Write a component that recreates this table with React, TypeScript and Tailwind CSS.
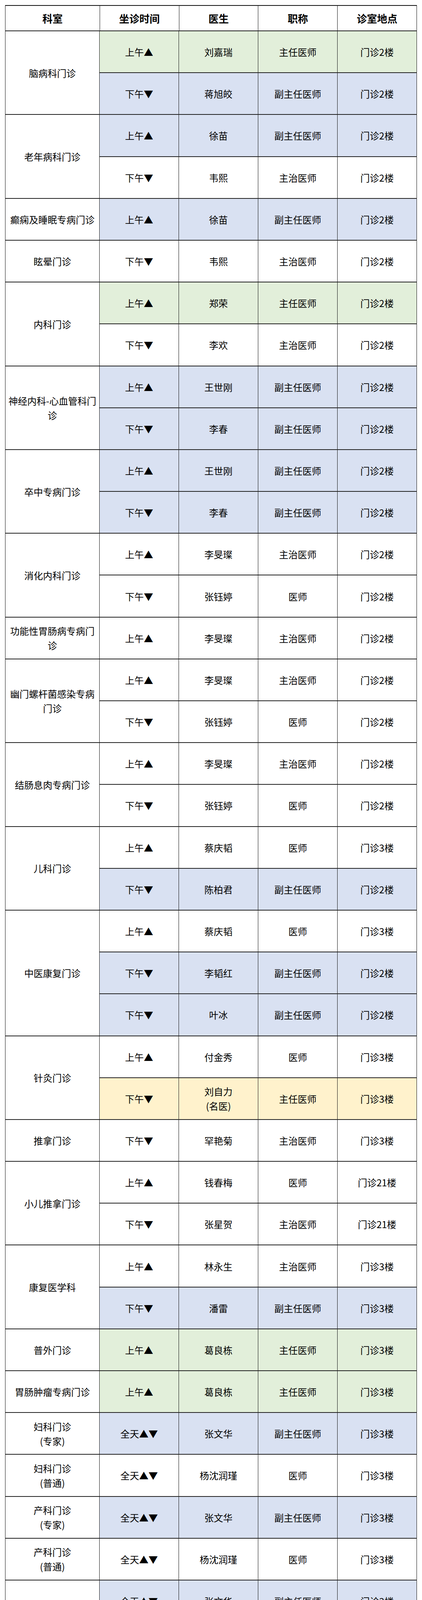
import React from "react";

type Row = { time: React.ReactNode; doctor: React.ReactNode; title: string; loc: string; bg: string };
type Group = { dept: React.ReactNode; rows: Row[] };

const G = "bg-[#e2efda]";
const B = "bg-[#d9e1f2]";
const W = "bg-white";
const Y = "bg-[#fff2cc]";

const AM = "上午▲";
const PM = "下午▼";
const ALL = "全天▲▼";

function Sun() {
  const rays = [];
  for (let i = 0; i < 12; i++) {
    const a = (i * Math.PI * 2) / 12;
    const x1 = 12 + Math.cos(a) * 7.5;
    const y1 = 12 + Math.sin(a) * 7.5;
    const x2 = 12 + Math.cos(a) * 11.2;
    const y2 = 12 + Math.sin(a) * 11.2;
    rays.push(
      <line key={i} x1={x1} y1={y1} x2={x2} y2={y2} stroke="#e39a00" strokeWidth="2.8" strokeLinecap="round" />
    );
  }
  return (
    <svg width="27" height="27" viewBox="0 0 24 24" className="inline-block shrink-0">
      {rays}
      <circle cx="12" cy="12" r="8.2" fill="#ffd21f" stroke="#e39a00" strokeWidth="1" />
      <circle cx="9.2" cy="10.4" r="1.1" fill="#4a2f00" />
      <circle cx="14.8" cy="10.4" r="1.1" fill="#4a2f00" />
      <path d="M8.4 13.4 Q12 17.2 15.6 13.4" stroke="#4a2f00" strokeWidth="1.3" fill="none" strokeLinecap="round" />
    </svg>
  );
}

const br = (a: string, b: string) => (
  <>
    {a}
    <br />
    {b}
  </>
);

const dotName = (a: string, b: string) => (
  <>
    {a}
    <span style={{ fontFamily: '"Liberation Sans", sans-serif' }}>·</span>
    {b}
  </>
);

const groups: Group[] = [
  {
    dept: "脑病科门诊",
    rows: [
      { time: AM, doctor: "刘嘉瑞", title: "主任医师", loc: "门诊2楼", bg: G },
      { time: PM, doctor: "蒋旭皎", title: "副主任医师", loc: "门诊2楼", bg: B },
    ],
  },
  {
    dept: "老年病科门诊",
    rows: [
      { time: AM, doctor: "徐苗", title: "副主任医师", loc: "门诊2楼", bg: B },
      { time: PM, doctor: "韦熙", title: "主治医师", loc: "门诊2楼", bg: W },
    ],
  },
  { dept: "癫痫及睡眠专病门诊", rows: [{ time: AM, doctor: "徐苗", title: "副主任医师", loc: "门诊2楼", bg: B }] },
  { dept: "眩晕门诊", rows: [{ time: PM, doctor: "韦熙", title: "主治医师", loc: "门诊2楼", bg: W }] },
  {
    dept: "内科门诊",
    rows: [
      { time: AM, doctor: "郑荣", title: "主任医师", loc: "门诊2楼", bg: G },
      { time: PM, doctor: "李欢", title: "主治医师", loc: "门诊2楼", bg: W },
    ],
  },
  {
    dept: "神经内科-心血管科门诊",
    rows: [
      { time: AM, doctor: "王世刚", title: "副主任医师", loc: "门诊2楼", bg: B },
      { time: PM, doctor: "李春", title: "副主任医师", loc: "门诊2楼", bg: B },
    ],
  },
  {
    dept: "卒中专病门诊",
    rows: [
      { time: AM, doctor: "王世刚", title: "副主任医师", loc: "门诊2楼", bg: B },
      { time: PM, doctor: "李春", title: "副主任医师", loc: "门诊2楼", bg: B },
    ],
  },
  {
    dept: "消化内科门诊",
    rows: [
      { time: AM, doctor: "李旻璨", title: "主治医师", loc: "门诊2楼", bg: W },
      { time: PM, doctor: "张钰婷", title: "医师", loc: "门诊2楼", bg: W },
    ],
  },
  { dept: "功能性胃肠病专病门诊", rows: [{ time: AM, doctor: "李旻璨", title: "主治医师", loc: "门诊2楼", bg: W }] },
  {
    dept: "幽门螺杆菌感染专病门诊",
    rows: [
      { time: AM, doctor: "李旻璨", title: "主治医师", loc: "门诊2楼", bg: W },
      { time: PM, doctor: "张钰婷", title: "医师", loc: "门诊2楼", bg: W },
    ],
  },
  {
    dept: "结肠息肉专病门诊",
    rows: [
      { time: AM, doctor: "李旻璨", title: "主治医师", loc: "门诊2楼", bg: W },
      { time: PM, doctor: "张钰婷", title: "医师", loc: "门诊2楼", bg: W },
    ],
  },
  {
    dept: "儿科门诊",
    rows: [
      { time: AM, doctor: "蔡庆韬", title: "医师", loc: "门诊3楼", bg: W },
      { time: PM, doctor: "陈柏君", title: "副主任医师", loc: "门诊2楼", bg: B },
    ],
  },
  {
    dept: "中医康复门诊",
    rows: [
      { time: AM, doctor: "蔡庆韬", title: "医师", loc: "门诊3楼", bg: W },
      { time: PM, doctor: "李韬红", title: "副主任医师", loc: "门诊2楼", bg: B },
      { time: PM, doctor: "叶冰", title: "副主任医师", loc: "门诊2楼", bg: B },
    ],
  },
  {
    dept: "针灸门诊",
    rows: [
      { time: AM, doctor: "付金秀", title: "医师", loc: "门诊3楼", bg: W },
      { time: PM, doctor: br("刘自力", "(名医)"), title: "主任医师", loc: "门诊3楼", bg: Y },
    ],
  },
  { dept: "推拿门诊", rows: [{ time: PM, doctor: "罕艳菊", title: "主治医师", loc: "门诊3楼", bg: W }] },
  {
    dept: "小儿推拿门诊",
    rows: [
      { time: AM, doctor: "钱春梅", title: "医师", loc: "门诊21楼", bg: W },
      { time: PM, doctor: "张星贺", title: "主治医师", loc: "门诊21楼", bg: W },
    ],
  },
  {
    dept: "康复医学科",
    rows: [
      { time: AM, doctor: "林永生", title: "主治医师", loc: "门诊3楼", bg: W },
      { time: PM, doctor: "潘雷", title: "副主任医师", loc: "门诊3楼", bg: B },
    ],
  },
  { dept: "普外门诊", rows: [{ time: AM, doctor: "葛良栋", title: "主任医师", loc: "门诊3楼", bg: G }] },
  { dept: "胃肠肿瘤专病门诊", rows: [{ time: AM, doctor: "葛良栋", title: "主任医师", loc: "门诊3楼", bg: G }] },
  { dept: br("妇科门诊", "(专家)"), rows: [{ time: ALL, doctor: "张文华", title: "副主任医师", loc: "门诊3楼", bg: B }] },
  { dept: br("妇科门诊", "(普通)"), rows: [{ time: ALL, doctor: "杨沈润瑾", title: "医师", loc: "门诊3楼", bg: W }] },
  { dept: br("产科门诊", "(专家)"), rows: [{ time: ALL, doctor: "张文华", title: "副主任医师", loc: "门诊3楼", bg: B }] },
  { dept: br("产科门诊", "(普通)"), rows: [{ time: ALL, doctor: "杨沈润瑾", title: "医师", loc: "门诊3楼", bg: W }] },
  {
    dept: "中医妇科门诊",
    rows: [
      { time: ALL, doctor: "张文华", title: "副主任医师", loc: "门诊3楼", bg: B },
      { time: ALL, doctor: "杨沈润瑾", title: "医师", loc: "门诊3楼", bg: W },
    ],
  },
  { dept: "产后康复专病门诊", rows: [{ time: ALL, doctor: "张文华", title: "副主任医师", loc: "门诊3楼", bg: B }] },
  { dept: "更年期门诊", rows: [{ time: ALL, doctor: "张文华", title: "副主任医师", loc: "门诊3楼", bg: B }] },
  { dept: "眼耳鼻喉科", rows: [{ time: ALL, doctor: "李璐璐", title: "主治医师", loc: "门诊3楼", bg: W }] },
  { dept: "眼科", rows: [{ time: ALL, doctor: "杨静晖", title: "主治医师", loc: "门诊3楼", bg: W }] },
  {
    dept: "皮肤科",
    rows: [
      { time: ALL, doctor: "杨榆婷", title: "主治医师", loc: "门诊3楼", bg: W },
      {
        time: (
          <span className="inline-flex items-center">
            上午▲午间
            <Sun />
          </span>
        ),
        doctor: "凡福青",
        title: "医师",
        loc: "门诊3楼",
        bg: W,
      },
    ],
  },
  {
    dept: "口腔科门诊",
    rows: [
      { time: ALL, doctor: "斯那永次", title: "医师", loc: "门诊4楼", bg: W },
      { time: AM, doctor: "李光泽", title: "副主任医师", loc: "门诊4楼", bg: B },
    ],
  },
  { dept: dotName("骨伤科", "疼痛科"), rows: [{ time: AM, doctor: "崔菁", title: "主治医师", loc: "门诊3楼", bg: W }] },
  { dept: dotName("骨伤科", "疼痛科"), rows: [{ time: PM, doctor: "陈晓林", title: "副主任医师", loc: "门诊3楼", bg: B }] },
  { dept: "体重管理门诊", rows: [{ time: PM, doctor: "陈鸿", title: "主治医师", loc: "门诊5楼", bg: W }] },
];

const cellBase = "flex items-center justify-center text-center border-r border-[#111111] px-[6px] leading-[37px] overflow-hidden";

export default function App() {
  return (
    <div
      className="bg-white w-[1080px] h-[5450px] overflow-hidden pt-[13px] pl-[13px] text-black text-[24px]"
      style={{ fontFamily: '"Noto Sans CJK SC", "Noto Sans", sans-serif' }}
    >
      <div className="w-[1054px] border-l border-t-2 border-[#111111] flex flex-col">
        <div className="flex h-[65px] border-b-2 border-[#222222] font-bold text-[26px]">
          <div className={`${cellBase} w-[242px]`}>科室</div>
          <div className={`${cellBase} w-[203px]`}>坐诊时间</div>
          <div className={`${cellBase} w-[203px]`}>医生</div>
          <div className={`${cellBase} w-[203px]`}>职称</div>
          <div className={`${cellBase} w-[203px]`}>诊室地点</div>
        </div>
        {groups.map((g, gi) => (
          <div key={gi} className="flex">
            <div className={`${cellBase} w-[242px] bg-white border-b-2 border-b-[#222222]`}>
              <div>{g.dept}</div>
            </div>
            <div className="flex flex-col w-[812px]">
              {g.rows.map((r, ri) => (
                <div key={ri} className={`flex h-[107.2px] border-b-2 border-[#222222] ${r.bg}`}>
                  <div className={`${cellBase} w-[203px] whitespace-nowrap`}>{r.time}</div>
                  <div className={`${cellBase} w-[203px]`}>
                    <div>{r.doctor}</div>
                  </div>
                  <div className={`${cellBase} w-[203px]`}>{r.title}</div>
                  <div className={`${cellBase} w-[203px]`}>{r.loc}</div>
                </div>
              ))}
            </div>
          </div>
        ))}
      </div>
    </div>
  );
}
